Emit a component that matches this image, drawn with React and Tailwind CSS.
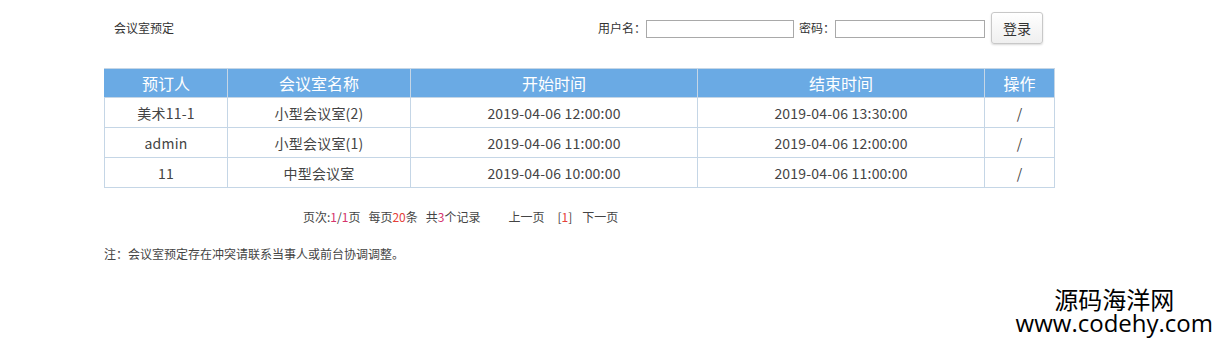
import React from 'react';

const COLS = [
  { label: '预订人', w: 'w-[123px]' },
  { label: '会议室名称', w: 'w-[183px]' },
  { label: '开始时间', w: 'w-[287px]' },
  { label: '结束时间', w: 'w-[287px]' },
  { label: '操作', w: 'w-[70px]' },
];

const ROWS = [
  ['美术11-1', '小型会议室(2)', '2019-04-06 12:00:00', '2019-04-06 13:30:00', '/'],
  ['admin', '小型会议室(1)', '2019-04-06 11:00:00', '2019-04-06 12:00:00', '/'],
  ['11', '中型会议室', '2019-04-06 10:00:00', '2019-04-06 11:00:00', '/'],
];

export default function App() {
  return (
    <div className="relative w-[1218px] h-[340px] bg-white text-[#333] font-['Noto_Sans_CJK_SC',sans-serif] overflow-hidden">
      {/* Top bar */}
      <div className="flex items-start pt-[12px] pl-[114px]">
        <div className="text-[12px] leading-[16px] mt-[8px]">会议室预定</div>
        <div className="ml-auto mr-[175px] flex items-start text-[12px]">
          <span className="mt-[8px] leading-[16px]">用户名：</span>
          <input className="mt-[8px] w-[148px] h-[18px] border border-[#a9a9a9] outline-none" />
          <span className="ml-[5px] mt-[8px] leading-[16px]">密码：</span>
          <input className="mt-[8px] w-[150px] h-[18px] border border-[#a9a9a9] outline-none" />
          <button className="ml-[6px] w-[52px] h-[32px] rounded-[3px] border border-[#c8c8c8] bg-gradient-to-b from-white to-[#efefef] shadow-[0_1px_2px_rgba(0,0,0,0.15)] text-[14px] text-[#333]">
            登录
          </button>
        </div>
      </div>

      {/* Table */}
      <div className="ml-[104px] mt-[24px] w-[950px]">
        <table className="w-[950px] border-collapse table-fixed">
          <thead>
            <tr className="bg-[#6aaae4] text-white h-[29px]">
              {COLS.map((c, i) => (
                <th
                  key={c.label}
                  className={`${c.w} font-normal text-[16px] leading-[20px] border border-[#c5d6e6] ${i === 0 ? 'border-l-[#6aaae4]' : ''}`}
                >
                  {c.label}
                </th>
              ))}
            </tr>
          </thead>
          <tbody>
            {ROWS.map((r, ri) => (
              <tr key={ri} className="h-[30px]">
                {r.map((cell, ci) => (
                  <td key={ci} className="text-center text-[14px] leading-[18px] border border-[#c5d6e6] text-[#444] tracking-[0.2px]">
                    {cell}
                  </td>
                ))}
              </tr>
            ))}
          </tbody>
        </table>
      </div>

      {/* Pagination */}
      <div className="flex text-[12px] leading-[16px] mt-[21px] pl-[303px] text-[#444]">
        <span>
          页次:<span className="text-[#d6336c]">1</span>/<span className="text-[#d6336c]">1</span>页
        </span>
        <span className="ml-[8px]">
          每页<span className="text-[#e5403a]">20</span>条
        </span>
        <span className="ml-[8px]">
          共<span className="text-[#d6336c]">3</span>个记录
        </span>
        <span className="ml-[28px]">上一页</span>
        <span className="ml-[13px]">
          [<span className="text-[#e5403a]">1</span>]
        </span>
        <span className="ml-[10px]">下一页</span>
      </div>

      <div className="mt-[21px] pl-[104px] text-[12px] leading-[16px] text-[#444]">
        注：会议室预定存在冲突请联系当事人或前台协调调整。
      </div>

      {/* Watermark */}
      <div className="absolute right-[5px] top-[287px] flex flex-col items-center text-black">
        <div className="text-[24px] leading-[24px]">源码海洋网</div>
        <div className="text-[24px] leading-[24px] font-['Open_Sans',sans-serif]">www.codehy.com</div>
      </div>
    </div>
  );
}
